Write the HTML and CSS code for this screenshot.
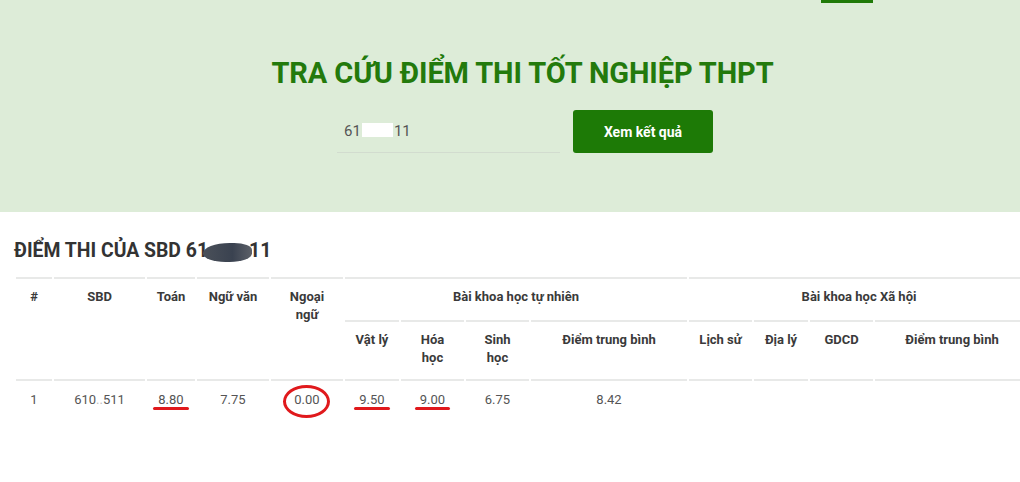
FILE: index.html
```html
<!DOCTYPE html>
<html lang="vi">
<head>
<meta charset="utf-8">
<title>Tra cứu điểm thi</title>
<link rel="stylesheet" href="styles.css">
</head>
<body>
<section class="hero">
  <div class="topnav"><span class="tabbar"></span></div>
  <h1 class="title">TRA CỨU ĐIỂM THI TỐT NGHIỆP THPT</h1>
  <form class="search">
    <div class="field"><span>61</span><span class="hide"></span><span>11</span></div>
    <button type="button" class="btn">Xem kết quả</button>
  </form>
</section>
<section class="result">
  <h2 class="heading">ĐIỂM THI CỦA SBD 61<span class="blob"></span>11</h2>
  <table class="scores">
    <colgroup>
      <col class="c36"><col class="c91"><col class="c48"><col class="c72"><col class="c72">
      <col class="c54"><col class="c63"><col class="c63"><col class="c156">
      <col class="c63"><col class="c54"><col class="c63"><col class="c154">
    </colgroup>
    <thead>
      <tr class="r1">
        <th rowspan="2">#</th>
        <th rowspan="2">SBD</th>
        <th rowspan="2">Toán</th>
        <th rowspan="2">Ngữ văn</th>
        <th rowspan="2">Ngoại<br>ngữ</th>
        <th colspan="4">Bài khoa học tự nhiên</th>
        <th colspan="4">Bài khoa học Xã hội</th>
      </tr>
      <tr class="r2">
        <th>Vật lý</th>
        <th>Hóa<br>học</th>
        <th>Sinh<br>học</th>
        <th>Điểm trung bình</th>
        <th>Lịch sử</th>
        <th>Địa lý</th>
        <th>GDCD</th>
        <th>Điểm trung bình</th>
      </tr>
    </thead>
    <tbody>
      <tr>
        <td>1</td>
        <td>610<span class="dots">..</span>511</td>
        <td><span class="uline">8.80</span></td>
        <td>7.75</td>
        <td><span class="circle">0.00</span></td>
        <td><span class="uline">9.50</span></td>
        <td><span class="uline">9.00</span></td>
        <td>6.75</td>
        <td>8.42</td>
        <td></td>
        <td></td>
        <td></td>
        <td></td>
      </tr>
    </tbody>
  </table>
</section>
</body>
</html>
```
FILE: styles.css
```css
html, body {
  margin: 0;
  padding: 0;
}
body {
  width: 1020px;
  overflow: hidden;
  background: #ffffff;
  font-family: Roboto, "Noto Sans", sans-serif;
  color: #555;
}
.hero {
  background: #ddecd8;
  height: 212px;
  box-sizing: border-box;
}
.topnav {
  display: flex;
  justify-content: flex-end;
  padding-right: 147px;
  height: 3px;
}
.tabbar {
  display: block;
  width: 52px;
  height: 3px;
  background: #1f7a08;
}
.title {
  margin: 52px 0 0;
  padding-left: 25px;
  text-align: center;
  font-size: 29px;
  line-height: 36px;
  font-weight: 700;
  color: #237a0c;
  letter-spacing: -0.1px;
}
.search {
  margin: 19px 0 0;
  display: flex;
  justify-content: center;
  gap: 13px;
  padding-left: 30px;
}
.field {
  width: 223px;
  height: 43px;
  box-sizing: border-box;
  padding: 13px 7px 0;
  border-bottom: 1px solid #d2dccf;
  font-size: 15px;
  line-height: 17px;
  color: #555;
  display: flex;
  align-items: flex-start;
}
.hide {
  display: inline-block;
  width: 31px;
  height: 14px;
  margin: 0 1px 0 1px;
  background: #ffffff;
}
.btn {
  width: 140px;
  height: 43px;
  border: none;
  border-radius: 3px;
  background: #1d7a06;
  color: #ffffff;
  font-family: Roboto, sans-serif;
  font-size: 14px;
  font-weight: 700;
  cursor: pointer;
}
.result {
  padding: 0 0 0 14px;
}
.heading {
  margin: 27px 0 0;
  font-size: 19.4px;
  line-height: 24px;
  font-weight: 700;
  color: #333;
  display: flex;
  align-items: center;
}
.blob {
  display: inline-block;
  width: 49px;
  height: 19px;
  margin: 2px -3px 0 -5px;
  border-radius: 60% 40% 50% 50%;
  background: linear-gradient(90deg, #4a5059, #3a4250 60%, #5c6068);
}
.scores {
  margin-top: 12px;
  border-collapse: separate;
  border-spacing: 2px;
  table-layout: fixed;
  width: 1017px;
  font-size: 13px;
  line-height: 18px;
}
.c36 { width: 36px; }
.c48 { width: 48px; }
.c54 { width: 54px; }
.c63 { width: 63px; }
.c72 { width: 72px; }
.c91 { width: 91px; }
.c154 { width: 154px; }
.c156 { width: 156px; }
.scores th,
.scores td {
  border-top: 2px solid #e8e9e8;
  padding: 9px 4px;
  text-align: center;
  vertical-align: top;
}
.scores th {
  font-weight: 700;
  color: #3a3a3a;
}
.r1 th {
  padding-bottom: 12px;
}
.r2 th {
  padding-bottom: 10px;
}
.scores td {
  color: #555;
  padding-top: 10px;
  padding-bottom: 40px;
}
.dots {
  color: #bbb;
  letter-spacing: 0;
}
.uline {
  position: relative;
  display: inline-block;
}
.uline::after {
  content: "";
  position: absolute;
  left: -5px;
  right: -5px;
  bottom: -1px;
  height: 3px;
  border-radius: 2px;
  background: #e0191c;
}
.circle {
  position: relative;
  display: inline-block;
}
.circle::after {
  content: "";
  position: absolute;
  left: 50%;
  top: 50%;
  width: 47px;
  height: 33px;
  margin-left: -24px;
  margin-top: -15px;
  box-sizing: border-box;
  border: 3px solid #e0191c;
  border-radius: 50%;
}
```
